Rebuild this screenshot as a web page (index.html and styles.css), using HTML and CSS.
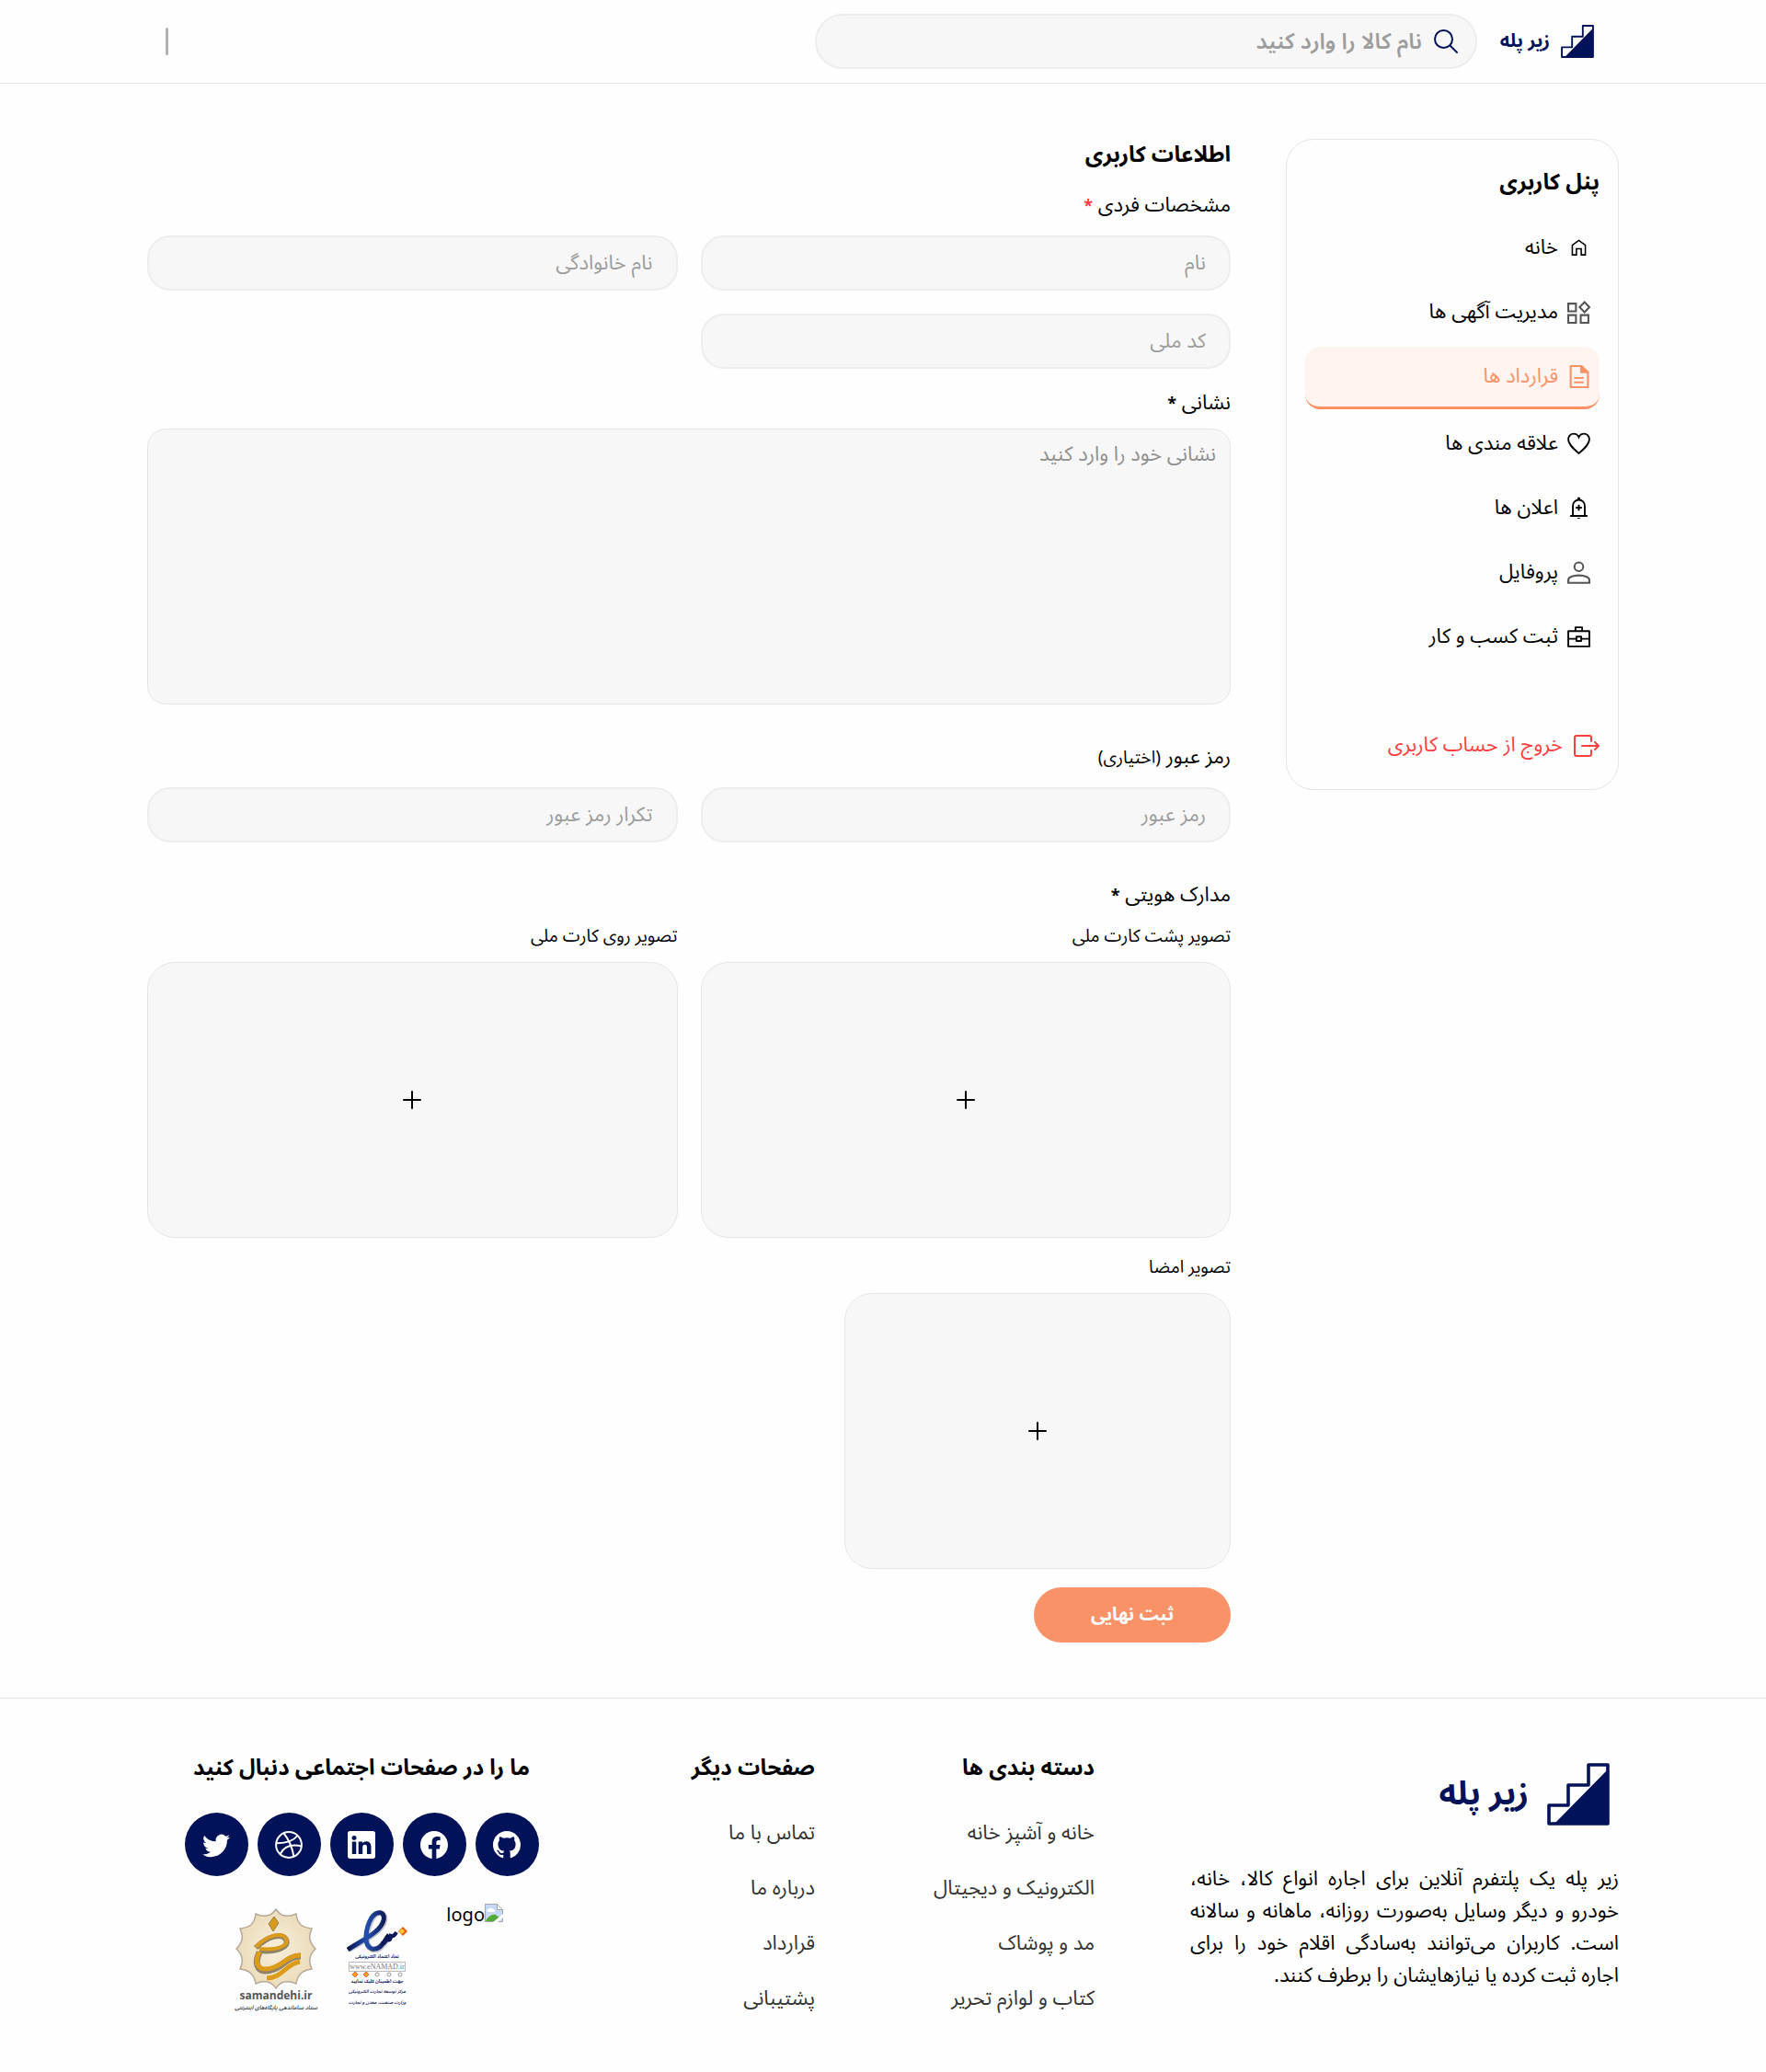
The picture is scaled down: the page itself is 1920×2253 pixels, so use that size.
FILE: index.html
```html
<!DOCTYPE html>
<html lang="fa" dir="rtl">
<head>
<meta charset="utf-8">
<title>اطلاعات کاربری</title>
<link rel="stylesheet" href="styles.css">
</head>
<body>
<svg class="sprite" aria-hidden="true">
  <symbol id="stairs" viewBox="0 0 68 68">
    <path d="M2 66V46H23V24H45V2H66V66Z" fill="none" stroke="#021259" stroke-width="3.6" stroke-linejoin="round"/>
    <path d="M8 66 66 7V63a4 4 0 0 1-4 4H7Z" fill="#021259"/>
  </symbol>
  <symbol id="plus" viewBox="0 0 20 20"><path d="M10 1V19M1 10H19" fill="none" stroke="#000" stroke-width="2" stroke-linecap="round"/></symbol>
</svg>

<header class="topbar">
  <div class="container topbar-row">
    <a class="brand" href="#"><svg class="brand-icon"><use href="#stairs"/></svg><span>زیر پله</span></a>
    <label class="search">
      <svg viewBox="0 0 28 28" width="28" height="28" fill="none" stroke="#021259" stroke-width="2" stroke-linecap="round"><circle cx="11.500" cy="11.500" r="9.500"/><path d="M18.500 18.500 26 26"/></svg>
      <input type="search" placeholder="نام کالا را وارد کنید" aria-label="نام کالا">
    </label>
    <span class="divider"></span>
  </div>
</header>

<main class="container layout">
  <aside class="panel">
    <h2>پنل کاربری</h2>
    <nav class="menu">
      <a href="#"><svg viewBox="0 0 24 24" fill="none" stroke="#000" stroke-width="1.500"><path d="M5.200 19.300V9.200L12 4.300l6.800 4.900v10.100h-4.300V13h-5v6.300Z"/></svg>خانه</a>
      <a href="#"><svg viewBox="0 0 24 24" fill="none" stroke="#555" stroke-width="2"><path d="M1 3h8v8H1zM1 15h8v8H1zM14 15h8v8h-8zM18 1.500 23 6.700 18 12 12.800 6.700Z"/></svg>مدیریت آگهی ها</a>
      <a class="active" href="#"><svg viewBox="0 0 24 24" fill="none" stroke="#fa9268" stroke-width="2" stroke-linejoin="round"><path d="M3.500 1h11l7 6.500V23h-18zM7 13.500h10M7 18h10"/><path d="M14.500 1v6.500h7Z" fill="#fa9268"/></svg>قرارداد ها</a>
      <a href="#"><svg viewBox="0 0 24 24" fill="none" stroke="#000" stroke-width="1.800"><path d="M12 22C7 17.500 1 13 1 7.500 1 4 3.500 1.600 6.500 1.600c2.500 0 4.500 1.400 5.500 3.600 1-2.200 3-3.600 5.500-3.600C20.500 1.600 23 4 23 7.500 23 13 17 17.500 12 22Z"/></svg>علاقه مندی ها</a>
      <a href="#"><svg viewBox="0 0 24 24" fill="none" stroke="#000" stroke-width="1.800"><path d="M5.800 20V9.500a6.200 6.200 0 0 1 12.400 0V20M3 20.200h18M12 8.300v6.400M8.800 11.500h6.400"/><path d="M10.500 3V2a1.500 1.500 0 0 1 3 0v1zM10.300 22h3.400c-.5 1.300-2.900 1.300-3.400 0Z" fill="#000" stroke="none"/></svg>اعلان ها</a>
      <a href="#"><svg viewBox="0 0 24 24" fill="none" stroke="#555" stroke-width="2"><circle cx="12" cy="6" r="4.600"/><path d="M1 22.800V20c0-3 5-5 11-5s11 2 11 5v2.800z"/></svg>پروفایل</a>
      <a href="#"><svg viewBox="0 0 24 24" fill="none" stroke="#000" stroke-width="1.800" stroke-linejoin="round"><path d="M1 6h22v16H1zM8.500 6V2h7v4M1 14h8.500M14.500 14H23M9.500 11.700h5v4.600h-5z"/></svg>ثبت کسب و کار</a>
    </nav>
    <a class="logout" href="#"><svg viewBox="0 0 28 24" fill="none" stroke="#ff3f3f" stroke-width="2" stroke-linecap="round" stroke-linejoin="round"><path d="M19 7V3a2 2 0 0 0-2-2H3a2 2 0 0 0-2 2v18a2 2 0 0 0 2 2h14a2 2 0 0 0 2-2v-4M9 12h18M23 8l4 4-4 4"/></svg>خروج از حساب کاربری</a>
  </aside>

  <form class="profile">
    <h1>اطلاعات کاربری</h1>
    <p class="label">مشخصات فردی <span class="required">*</span></p>
    <div class="fields">
      <input class="field" type="text" placeholder="نام" aria-label="نام">
      <input class="field" type="text" placeholder="نام خانوادگی" aria-label="نام خانوادگی">
      <input class="field" type="text" placeholder="کد ملی" aria-label="کد ملی">
    </div>
    <label class="label address-label" for="address">نشانی <span class="star">*</span></label>
    <textarea class="address" id="address" placeholder="نشانی خود را وارد کنید"></textarea>
    <p class="label group-label">رمز عبور <span class="small">(اختیاری)</span></p>
    <div class="fields">
      <input class="field" type="password" placeholder="رمز عبور" aria-label="رمز عبور">
      <input class="field" type="password" placeholder="تکرار رمز عبور" aria-label="تکرار رمز عبور">
    </div>
    <p class="label docs-label">مدارک هویتی <span class="star">*</span></p>
    <div class="uploads">
      <div class="upload"><span class="caption" id="back">تصویر پشت کارت ملی</span><button type="button" class="drop" aria-labelledby="back"><svg><use href="#plus"/></svg></button></div>
      <div class="upload"><span class="caption" id="front">تصویر روی کارت ملی</span><button type="button" class="drop" aria-labelledby="front"><svg><use href="#plus"/></svg></button></div>
      <div class="upload signature"><span class="caption" id="sign">تصویر امضا</span><button type="button" class="drop" aria-labelledby="sign"><svg><use href="#plus"/></svg></button></div>
    </div>
    <button class="submit" type="submit">ثبت نهایی</button>
  </form>
</main>

<footer class="footer">
  <div class="container footer-grid">
    <section>
      <a class="brand brand-large" href="#"><svg class="brand-icon"><use href="#stairs"/></svg><span>زیر پله</span></a>
      <p class="about">زیر پله یک پلتفرم آنلاین برای اجاره انواع کالا، خانه، خودرو و دیگر وسایل به‌صورت روزانه، ماهانه و سالانه است. کاربران می‌توانند به‌سادگی اقلام خود را برای اجاره ثبت کرده یا نیازهایشان را برطرف کنند.</p>
    </section>
    <section class="links">
      <h3>دسته بندی ها</h3>
      <a href="#">خانه و آشپز خانه</a><a href="#">الکترونیک و دیجیتال</a><a href="#">مد و پوشاک</a><a href="#">کتاب و لوازم تحریر</a>
    </section>
    <section class="links">
      <h3>صفحات دیگر</h3>
      <a href="#">تماس با ما</a><a href="#">درباره ما</a><a href="#">قرارداد</a><a href="#">پشتیبانی</a>
    </section>
    <section class="social">
      <h3>ما را در صفحات اجتماعی دنبال کنید</h3>
      <div class="circles">
        <a href="#" aria-label="GitHub"><svg viewBox="0 0 16 16"><path d="M8 0C3.580 0 0 3.580 0 8c0 3.540 2.290 6.530 5.470 7.590.4.070.55-.17.55-.38 0-.19-.01-.82-.01-1.490-2.010.37-2.530-.49-2.690-.94-.09-.23-.48-.94-.82-1.130-.28-.15-.68-.52-.01-.53.63-.01 1.080.58 1.230.82.72 1.210 1.870.87 2.330.66.07-.52.28-.87.51-1.070-1.780-.2-3.640-.89-3.640-3.950 0-.87.31-1.590.82-2.150-.08-.2-.36-1.020.08-2.120 0 0 .67-.21 2.200.82.64-.18 1.320-.27 2-.27s1.360.09 2 .27c1.530-1.040 2.200-.82 2.200-.82.44 1.100.16 1.920.08 2.120.51.56.82 1.270.82 2.150 0 3.070-1.870 3.750-3.650 3.950.29.25.54.73.54 1.480 0 1.070-.01 1.930-.01 2.200 0 .21.15.46.55.38A8.010 8.010 0 0 0 16 8c0-4.420-3.580-8-8-8"/></svg></a>
        <a href="#" aria-label="Facebook"><svg viewBox="0 0 16 16"><path d="M16 8.049c0-4.446-3.582-8.050-8-8.050C3.580 0-.002 3.603-.002 8.050c0 4.017 2.926 7.347 6.750 7.951v-5.625h-2.030V8.050H6.750V6.275c0-2.017 1.195-3.131 3.022-3.131.876 0 1.791.157 1.791.157v1.980h-1.009c-.993 0-1.303.621-1.303 1.258v1.510h2.218l-.354 2.326H9.250V16c3.824-.604 6.750-3.934 6.750-7.951"/></svg></a>
        <a href="#" aria-label="LinkedIn"><svg viewBox="0 0 16 16"><path d="M0 1.146C0 .513.526 0 1.175 0h13.650C15.474 0 16 .513 16 1.146v13.708c0 .633-.526 1.146-1.175 1.146H1.175C.526 16 0 15.487 0 14.854zm4.943 12.248V6.169H2.542v7.225zm-1.200-8.212c.837 0 1.358-.554 1.358-1.248-.015-.709-.52-1.248-1.342-1.248S2.400 3.226 2.400 3.934c0 .694.521 1.248 1.327 1.248zm4.908 8.212V9.359c0-.216.016-.432.080-.586.173-.431.568-.878 1.232-.878.869 0 1.216.662 1.216 1.634v3.865h2.401V9.250c0-2.220-1.184-3.252-2.764-3.252-1.274 0-1.845.7-2.165 1.193v-1.022h-2.400c.030.678 0 7.225 0 7.225z"/></svg></a>
        <a href="#" aria-label="Dribbble"><svg viewBox="0 0 30 30" class="outline"><circle cx="15" cy="15" r="13.900"/><path d="M9.500 2.300C15 9 18.500 17 20.500 27.700M1.200 13.200C10 13.400 19 12 24.500 5M5.600 25C10 16.500 18 14 28.800 16.500"/></svg></a>
        <a href="#" aria-label="Twitter"><svg viewBox="0 0 16 16"><path d="M5.026 15c6.038 0 9.341-5.003 9.341-9.334q.002-.211-.006-.422A6.700 6.700 0 0 0 16 3.542a6.700 6.700 0 0 1-1.889.518 3.300 3.300 0 0 0 1.447-1.817 6.500 6.500 0 0 1-2.087.793A3.286 3.286 0 0 0 7.875 6.030a9.320 9.320 0 0 1-6.767-3.429 3.290 3.290 0 0 0 1.018 4.382A3.300 3.300 0 0 1 .640 6.575v.045a3.290 3.290 0 0 0 2.632 3.218 3.200 3.200 0 0 1-.865.115 3 3 0 0 1-.614-.057 3.280 3.280 0 0 0 3.067 2.277A6.600 6.600 0 0 1 .780 13.580a6 6 0 0 1-.780-.045A9.340 9.340 0 0 0 5.026 15"/></svg></a>
      </div>
      <div class="badges">
        <a class="badge missing" href="#"><svg viewBox="0 0 20 20" width="20" height="20"><path d="M.5.500h13l6 6v13H.5Z" fill="#c6d9f7" stroke="#a5a5a5"/><path d="M3 9a2 2 0 0 1 1-3 3 3 0 0 1 5 0 2 2 0 0 1 2 3Z" fill="#fff"/><path d="M1 19c3-6 9-9 12-6l3 2-5 4Z" fill="#52ab38"/><path d="M9 20 20 11v4l-6 5Z" fill="#fff"/><path d="M13.500.500v6h6Z" fill="#fff" stroke="#a5a5a5"/></svg><span>logo</span></a>
        <a class="badge enamad" href="#">
          <svg viewBox="0 0 66 46" width="66" height="46" fill="none"><defs><linearGradient id="ink" x1="0" x2="1"><stop stop-color="#0b1450"/><stop offset=".45" stop-color="#2450b0"/><stop offset="1" stop-color="#0a0f45"/></linearGradient></defs><path d="M2 43C18 34 38 24 41 12 43 2 34 0 28 9 21 21 19 40 28 43c10 2 13-8 19-15" stroke="#c3c4cc" stroke-width="6"/><path d="M1 43C16 33 37 24 40 11 42 1 33 0 27 8 20 20 18 39 27 42c10 2 13-8 19-15" stroke="url(#ink)" stroke-width="5"/><path d="M37 36c5 1 6-3 6-6 2 4 5 3 5-2 3 1 5-2 6-4" stroke="#10185a" stroke-width="4"/><path d="M61 18 66 23 61 28 56 23Z" fill="#e85b1b"/><path d="m60 20 3 3-3 3-3-3Z" fill="#ffd129"/></svg>
          <strong>نماد اعتماد الکترونیکی</strong>
          <span class="site">www.eNAMAD.ir</span>
          <svg viewBox="0 0 60 6" width="60" height="6" fill="none" stroke="#999"><path d="M6 0 9 3 6 6 3 3ZM18 0l3 3-3 3-3-3Z" fill="#f9a01f" stroke="#f26522"/><circle cx="30" cy="3" r="2"/><circle cx="43" cy="3" r="2"/><circle cx="55" cy="3" r="2"/></svg>
          <strong>جهت اطمینان کلیک نمایید</strong>
          <em>مرکز توسعه تجارت الکترونیکی</em>
          <em>وزارت صنعت، معدن و تجارت</em>
        </a>
        <a class="badge samandehi" href="#">
          <svg viewBox="0 0 88 88" width="88" height="88" fill="none"><defs><radialGradient id="sand"><stop stop-color="#f8efdb"/><stop offset="1" stop-color="#ebdcba"/></radialGradient></defs><path d="M44 1Q49 8 54 8 60 9 66 6 67 14 71 18 75 21 83 22 80 29 81 34 82 39 87 44 82 49 81 54 80 60 83 66 75 67 71 71 67 75 66 82 60 79 54 80 49 80 44 87 39 80 34 80 28 79 22 82 21 75 17 71 13 67 5 66 8 60 7 54 6 49 1 44 6 39 7 34 8 29 5 22 13 21 17 18 21 14 22 6 28 9 34 8 39 8 44 1Z" fill="url(#sand)" stroke="#b6a998" stroke-width="1.500"/><path d="m42 9 5 7-6 9-5-8Z" fill="#d99a1b" stroke="#92804f"/><path d="M22 43C36 29 51 27 55 34c4 8-10 14-29 12" stroke="#8e8269" stroke-width="6"/><path d="M22 42C36 28 51 26 55 33c4 8-10 13-29 11" stroke="#dc9c1a" stroke-width="4"/><path d="M26 48C19 63 26 72 42 66c11-4 15-14 29-14" stroke="#8e8269" stroke-width="7"/><path d="M26 47C19 62 26 70 42 64c11-4 15-13 29-13M34 76c17 0 20-15 36-18" stroke="#dc9c1a" stroke-width="5"/></svg>
          <b>samandehi.ir</b>
          <i>ستاد ساماندهی پایگاه‌های اینترنتی</i>
        </a>
      </div>
    </section>
  </div>
</footer>
</body>
</html>
```
FILE: styles.css
```css
* { box-sizing: border-box; }
body { margin: 0; background: #fefefe; color: #000; font-family: "Noto Sans Arabic", "Noto Sans", "DejaVu Sans", sans-serif; font-size: 22px; line-height: 35px; }
h1, h2, h3, p { margin: 0; }
h1, h2, h3 { font-size: 24px; line-height: 36px; font-weight: 700; }
a { color: inherit; text-decoration: none; }
input, textarea, button { font: inherit; }
svg { flex: none; }
.sprite { position: absolute; width: 0; height: 0; }
.container { max-width: 1640px; margin: 0 auto; padding: 0 20px; }

.topbar { border-bottom: 1px solid #e5e5e5; }
.topbar-row { display: flex; align-items: center; height: 90px; }
.brand { display: flex; align-items: center; gap: 12px; color: #021259; font-weight: 700; font-size: 20px; margin-inline: 27px 25px; white-space: nowrap; }
.brand-icon { width: 36px; height: 36px; }
.search { display: flex; align-items: center; gap: 12px; width: 45%; height: 60px; padding: 0 18px; border: 2px solid #ededed; border-radius: 30px; background: #f7f7f7; }
.search input { flex: 1; min-width: 0; border: 0; background: none; outline: 0; font-size: 24px; font-weight: 600; padding: 0; }
::placeholder { color: #9d9d9d; opacity: 1; }
.divider { width: 3px; height: 30px; margin-inline: auto 20px; border-radius: 2px; background: #b1b1b1; }

.layout { display: grid; grid-template-columns: 362px 1fr; gap: 60px; align-items: start; padding-top: 60px; padding-bottom: 60px; }
.panel { border: 1px solid #e5e5e5; border-radius: 30px; padding: 29px 20px 30px; }
.menu { display: grid; gap: 5px; margin-top: 20px; }
.menu a { display: flex; align-items: center; gap: 10px; height: 65px; padding: 0 10px; }
.menu svg { width: 25px; height: 25px; }
.menu .active { height: 68px; border-bottom: 3px solid #fa9268; border-radius: 16px; background: #fff4ef; color: #fa9268; }
.logout { display: flex; align-items: center; gap: 12px; margin-top: 68px; color: #ff3f3f; }
.logout svg { width: 28px; height: 24px; }

.profile { min-width: 0; }
.label { display: block; }
.profile h1 { margin-bottom: 19px; }
.required, .star { font-size: 18px; line-height: 1; font-weight: 700; }
.required { color: #ff3f3f; }
.small { font-size: 19px; line-height: 1; }
.caption { font-size: 19px; }
.fields { display: grid; grid-template-columns: 1fr 1fr; gap: 25px; margin-top: 15px; }
.field { width: 100%; min-width: 0; height: 60px; padding: 0 25px; border: 2px solid #ededed; border-radius: 25px; background: #f7f7f7; }
.address-label { margin-top: 20px; }
.address { display: block; width: 100%; height: 300px; margin-top: 10px; padding: 10px 15px; border: 1px solid #e5e5e5; border-radius: 20px; background: #f7f7f7; resize: none; }
.address::placeholder { color: #8f8f8f; }
.group-label, .docs-label { margin-top: 40px; }
.uploads { display: grid; grid-template-columns: 1fr 1fr; gap: 15px 25px; margin-top: 10px; }
.upload { display: grid; gap: 10px; }
.drop { display: grid; place-items: center; width: 100%; height: 300px; border: 1px solid #e5e5e5; border-radius: 30px; background: #f7f7f7; padding: 0; }
.drop svg { width: 20px; height: 20px; }
.signature { max-width: 420px; grid-column: 1 / -1; width: 100%; }
.submit { margin-top: 20px; width: 214px; height: 60px; border: 0; border-radius: 30px; background: #fa9268; color: #fff; font-size: 20px; font-weight: 700; }

.footer { border-top: 1px solid #e5e5e5; }
.footer-grid { display: grid; grid-template-columns: 466fr 244fr 244fr 466fr; gap: 60px; padding-top: 58px; padding-bottom: 60px; }
.brand-large { margin: 12px 10px 41px; gap: 20px; font-size: 36px; line-height: 68px; }
.brand-large .brand-icon { width: 68px; height: 68px; }
.about { text-align: justify; }
.links { display: grid; align-content: start; justify-items: start; gap: 25px; padding-inline-start: 44px; white-space: nowrap; color: #333; }
.links h3 { color: #000; margin-bottom: 10px; }
.social { display: flex; flex-direction: column; align-items: center; }
.circles { display: flex; gap: 10px; margin-top: 30px; }
.circles a { display: grid; place-items: center; width: 69px; height: 69px; border-radius: 50%; background: #021259; }
.circles svg { width: 30px; height: 30px; fill: #fff; }
.circles .outline { fill: none; stroke: #fff; stroke-width: 2; }
.badges { display: flex; justify-content: center; gap: 32px; margin-top: 30px; width: 100%; padding-left: 16px; }
.badge { display: flex; flex-direction: column; align-items: center; white-space: nowrap; }
.missing { flex-direction: row; align-items: flex-start; width: 72px; font-size: 20px; line-height: 26px; }
.enamad { padding-top: 7px; width: 66px; color: #202466; line-height: 10px; font-size: 5px; }
.enamad .site { font: 8px/9px "Liberation Serif", serif; color: #777; border: 1px solid #bbb; }
.enamad em { font-size: 5px; line-height: 12px; font-weight: 600; }
.samandehi { padding-top: 5px; width: 90px; color: #555; }
.samandehi b { font: 700 12px/14px "Open Sans", sans-serif; }
.samandehi i { font-size: 6px; line-height: 12px; font-weight: 700; }
```
